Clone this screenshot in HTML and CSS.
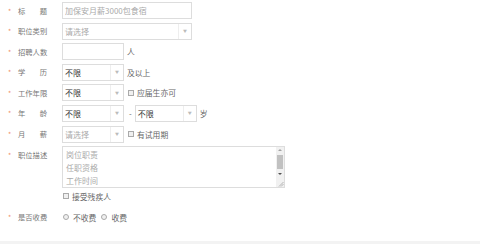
FILE: index.html
```html
<!DOCTYPE html>
<html lang="zh-CN">
<head>
    <meta charset="UTF-8">
    <title>发布职位</title>
    <link rel="stylesheet" href="styles.css">
</head>
<body>
    <div class="form">
        <div class="row">
            <div class="label"><i class="req">*</i><span class="name spread"><span>标</span><span>题</span></span></div>
            <input class="input w-long" placeholder="加保安月薪3000包食宿">
        </div>

        <div class="row">
            <div class="label"><i class="req">*</i><span class="name">职位类别</span></div>
            <div class="select long">
                <span class="select-text empty">请选择</span>
                <span class="select-arrow">▼</span>
            </div>
        </div>

        <div class="row">
            <div class="label"><i class="req">*</i><span class="name">招聘人数</span></div>
            <input class="input w-short">
            <span class="after">人</span>
        </div>

        <div class="row">
            <div class="label"><i class="req">*</i><span class="name spread"><span>学</span><span>历</span></span></div>
            <div class="select">
                <span class="select-text">不限</span>
                <span class="select-arrow">▼</span>
            </div>
            <span class="after">及以上</span>
        </div>

        <div class="row">
            <div class="label"><i class="req">*</i><span class="name">工作年限</span></div>
            <div class="select">
                <span class="select-text">不限</span>
                <span class="select-arrow">▼</span>
            </div>
            <label class="check"><span class="box"></span>应届生亦可</label>
        </div>

        <div class="row">
            <div class="label"><i class="req">*</i><span class="name spread"><span>年</span><span>龄</span></span></div>
            <div class="select">
                <span class="select-text">不限</span>
                <span class="select-arrow">▼</span>
            </div>
            <span class="dash">-</span>
            <div class="select">
                <span class="select-text">不限</span>
                <span class="select-arrow">▼</span>
            </div>
            <span class="after">岁</span>
        </div>

        <div class="row">
            <div class="label"><i class="req">*</i><span class="name spread"><span>月</span><span>薪</span></span></div>
            <div class="select">
                <span class="select-text empty">请选择</span>
                <span class="select-arrow">▼</span>
            </div>
            <label class="check"><span class="box"></span>有试用期</label>
        </div>

        <div class="row tall">
            <div class="label"><i class="req">*</i><span class="name">职位描述</span></div>
            <div class="area">
                <div class="area-text">岗位职责<br>任职资格<br>工作时间</div>
                <div class="scroll">
                    <span class="arrow-up"></span>
                    <span class="thumb"></span>
                    <span class="arrow-down"></span>
                    <svg class="grip" width="6" height="6" viewBox="0 0 6 6">
                        <path d="M1 5.5 L5.5 1 M3 5.5 L5.5 3" stroke="#999" stroke-width="0.7" fill="none"/>
                    </svg>
                </div>
            </div>
        </div>

        <div class="row small">
            <div class="label"></div>
            <label class="check first"><span class="box"></span>接受残疾人</label>
        </div>

        <div class="row small fee">
            <div class="label"><i class="req">*</i><span class="name">是否收费</span></div>
            <label class="radio"><span class="dot"></span>不收费</label>
            <label class="radio"><span class="dot"></span>收费</label>
        </div>
    </div>

    <div class="footer"></div>
</body>
</html>
```

FILE: styles.css
```css
body {
    margin: 0;
    font-family: "Noto Sans CJK SC", "Liberation Sans", sans-serif;
    font-size: 7.8px;
    color: #666;
    background-color: #fff;
}

.form {
    padding: 2px 0 0 8px;
}

.row {
    display: flex;
    align-items: center;
    height: 17px;
    margin-bottom: 3.6px;
}

.label {
    display: flex;
    align-items: center;
    width: 54px;
    height: 17px;
    flex-shrink: 0;
    font-size: 7.3px;
}

.req {
    width: 10px;
    color: #f0906a;
    font-style: normal;
    font-size: 7px;
}

.name {
    width: 29px;
    color: #777;
    white-space: nowrap;
}

.spread {
    display: flex;
    justify-content: space-between;
}

.input {
    height: 17px;
    box-sizing: border-box;
    border: 1px solid #ddd;
    padding: 0 2px;
    margin: 0;
    font: inherit;
    font-size: 8px;
    color: #333;
    outline: none;
}

.input::placeholder {
    color: #aaa;
}

.w-long {
    width: 130px;
}

.w-short {
    width: 62px;
}

.select {
    display: flex;
    width: 62px;
    height: 17px;
    box-sizing: border-box;
    border: 1px solid #ddd;
    font-size: 8px;
}

.select.long {
    width: 130px;
}

.select-text {
    flex: 1;
    padding-left: 2px;
    line-height: 15px;
    color: #333;
}

.select-text.empty {
    color: #aaa;
}

.select-arrow {
    width: 12px;
    border-left: 1px solid #eee;
    color: #bbb;
    font-size: 4px;
    display: flex;
    align-items: center;
    justify-content: center;
}

.after {
    margin-left: 3px;
}

.dash {
    margin: 0 3px 0 5px;
}

.check, .radio {
    display: flex;
    align-items: center;
    margin-left: 4px;
}

.check.first {
    margin-left: 1px;
}

.box {
    width: 4px;
    height: 4px;
    border: 1px solid #aaa;
    background-color: #f0f0f0;
    margin-right: 3px;
}

.row.tall {
    height: 42px;
    align-items: flex-start;
    margin-bottom: 2px;
}

.area {
    display: flex;
    width: 223px;
    height: 42px;
    box-sizing: border-box;
    border: 1px solid #ddd;
}

.area-text {
    flex: 1;
    padding: 2px 3px;
    line-height: 12.8px;
    font-size: 8px;
    color: #aaa;
}

.scroll {
    width: 8px;
    background-color: #f1f1f1;
    display: flex;
    flex-direction: column;
    align-items: center;
}

.arrow-up {
    width: 0;
    height: 0;
    margin-top: 2px;
    border-left: 2px solid transparent;
    border-right: 2px solid transparent;
    border-bottom: 2px solid #a3a3a3;
}

.thumb {
    width: 6px;
    height: 14px;
    margin-top: 4px;
    background-color: #c1c1c1;
}

.arrow-down {
    width: 0;
    height: 0;
    margin-top: 4px;
    border-left: 2px solid transparent;
    border-right: 2px solid transparent;
    border-top: 2px solid #505050;
}

.grip {
    margin-top: auto;
    align-self: flex-end;
}

.row.small {
    height: 12px;
    margin-bottom: 9px;
}

.row.small .label {
    height: 12px;
}

.fee .radio:first-of-type {
    margin-left: 1px;
}

.radio {
    margin-right: 1px;
}

.dot {
    width: 4px;
    height: 4px;
    border: 1px solid #aaa;
    border-radius: 50%;
    background-color: #f0f0f0;
    margin-right: 4px;
}

.footer {
    margin-top: 18px;
    height: 3px;
    background-color: #f3f3f3;
}
```
